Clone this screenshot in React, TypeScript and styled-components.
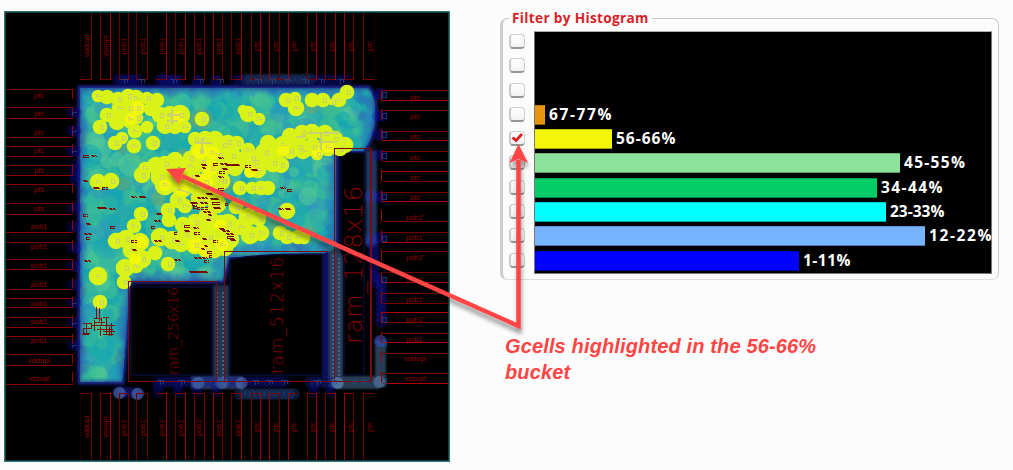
import React from 'react';
import styled, { createGlobalStyle } from 'styled-components';

const Global = createGlobalStyle`
  *{box-sizing:border-box}
  body{margin:0;background:#fcfcfc;overflow:hidden}
`;
const Page = styled.main`
  position:relative;display:flex;width:1013px;height:470px;padding:11px 0 0 4px;
  background:#fcfcfc;overflow:hidden;
`;
const MapFrame = styled.section`
  flex:none;width:446px;height:451px;
  svg{display:block}
`;
const Side = styled.section`
  display:flex;flex-direction:column;width:499px;margin-left:50px;padding-top:6px;
`;
const Group = styled.fieldset`
  display:flex;min-width:0;height:271px;margin:-8px 0 0;padding:4px 0 0 6px;
  border:1px solid #c4cac4;border-left:3px solid #ccc;border-bottom:1px solid #dcdedb;
  border-radius:7px;
`;
const Legend = styled.legend`
  height:18px;margin-left:0;padding:0 3px 0 3px;color:#d81f28;white-space:nowrap;
  font:700 13.6px/18px "Open Sans","Noto Sans",sans-serif;letter-spacing:.34px;
`;
const Checks = styled.div`
  display:flex;flex-direction:column;width:25px;
`;
const CheckCell = styled.div`
  height:24.3px;padding-top:3px;
`;
const Check = styled.div`
  width:16px;height:15px;border:1px solid #ccd0cc;border-bottom:2px solid #949894;
  border-left:2px solid #c8ccc8;border-radius:4px;background:linear-gradient(#fff,#f1f3f1);
  svg{display:block;overflow:visible}
`;
const Chart = styled.div`
  width:458px;height:243px;background:#000;border:1px solid #777;border-top:1px solid #aab0aa;
`;
const Row = styled.div`
  display:flex;align-items:flex-start;height:24.3px;
`;
const Bar = styled.div<{ $color: string; $w: number }>`
  flex:none;width:${p => p.$w}px;height:20px;background:${p => p.$color};
  border-bottom:1px solid #0005;border-top:1px solid #0003;
`;
const Label = styled.span<{ $space: number }>`
  margin:-1px 0 0 4px;color:#fff;white-space:nowrap;
  font:700 15.5px/20px "Open Sans","Noto Sans",sans-serif;letter-spacing:${p => p.$space}px;
`;
const Caption = styled.p`
  margin:53px 0 0 5px;color:#ff4444;white-space:pre;
  font:italic 700 20px/26px "Liberation Sans",Arial,sans-serif;letter-spacing:.14px;
`;
const Callout = styled.svg`
  position:absolute;left:0;top:0;pointer-events:none;
`;

const rows = [
  { w: 0, c: '', t: '', s: 0 }, { w: 0, c: '', t: '', s: 0 }, { w: 0, c: '', t: '', s: 0 },
  { w: 10, c: '#e89410', t: '67-77%', s: 1.6 },
  { w: 77, c: '#f4f60a', t: '56-66%', s: 1 },
  { w: 365, c: '#8be29b', t: '45-55%', s: 1.3 },
  { w: 342, c: '#04cc66', t: '34-44%', s: 1.4 },
  { w: 351, c: '#00ffff', t: '23-33%', s: 0 },
  { w: 390, c: '#77b4ff', t: '12-22%', s: 1.6 },
  { w: 264, c: '#0000ff', t: '1-11%', s: .5 },
];

// Repeatable pseudo-random sequence for the density texture.
const makeRandom = (seed: number) => () => {
  seed = (seed * 1664525 + 1013904223) % 4294967296;
  return seed / 4294967296;
};

type Spot = [number, number, number, string, number];
const region = 'M80 88H368Q376 93 375 118Q374 137 363 151H336V249L322 254L229 257L223 281H130L126 340L122 382H80Z';
const inRegion = (x: number, y: number) =>
  (y < 150 && x < 366) || (y < 250 && x < 329) || (y < 279 && x < 217) || x < 121;

const rnd = makeRandom(17);
const tints = ['#43c28f', '#38bb95', '#19aab0', '#2db1a5', '#0fa5b4', '#46c28a', '#3095c0', '#57c995', '#12a8b0', '#3fc492'];
const density: Spot[] = [];
for (let i = 0; i < 1100; i++) {
  const x = 84 + rnd() * 285, y = 93 + rnd() * 284;
  if (inRegion(x, y)) density.push([x, y, 5 + rnd() * 7, tints[Math.floor(rnd() * tints.length)], .5]);
}
const edges: Spot[] = [];
const edge = (x1: number, y1: number, x2: number, y2: number) => {
  const n = Math.hypot(x2 - x1, y2 - y1) / 5;
  for (let i = 0; i <= n; i++)
    edges.push([x1 + (x2 - x1) * i / n + rnd() * 4 - 2, y1 + (y2 - y1) * i / n + rnd() * 4 - 2, 3 + rnd() * 4, ['#2a55b5', '#2777bf', '#2b65b8', '#258bc4'][Math.floor(rnd() * 4)], .36]);
};
edge(82, 92, 82, 376); edge(85, 91, 362, 91); edge(371, 100, 370, 135); edge(331, 165, 331, 245);
edge(232, 250, 328, 246); edge(126, 284, 120, 378); edge(134, 277, 214, 277); edge(220, 257, 220, 276);
edge(364, 142, 368, 135); edge(358, 96, 368, 100); edge(357, 110, 368, 122);

const hot: number[][] = [
  [98,96,6],[107,97,7],[118,99,7],[128,96,7],[136,98,8],[147,98,6],[157,100,7],[107,115,7],[120,108,8],[129,108,8],[137,108,8],[117,122,8],[130,119,9],[137,118,6],[100,127,7],[135,131,7],[147,127,6],[122,138,6],[115,143,7],[134,146,7],[153,143,7],[151,109,7],[160,115,8],[170,115,9],[180,115,10],[165,126,8],[175,126,8],[185,127,6],[202,119,7],
  [195,139,7],[205,139,8],[215,140,9],[223,145,7],[200,151,10],[213,153,10],[190,158,7],[175,160,8],[228,142,7],[221,155,9],[232,156,9],
  [248,114,8],[243,110,5],[259,119,6],[286,100,7],[295,98,6],[296,108,8],[312,100,7],[323,100,7],[332,102,3],[339,100,7],[347,92,7],
  [290,136,8],[302,133,8],[312,132,8],[325,133,8],[335,139,8],[345,145,8],[328,147,9],[313,147,9],[299,147,9],[283,145,9],[268,143,8],[265,153,10],[237,143,7],[248,150,7],[317,154,6],[275,153,9],[290,151,8],[303,151,8],[340,149,7],[252,158,8],
  [134,148,5],[98,182,8],[111,181,8],[142,175,8],[145,168,6],[156,166,9],[165,164,8],[160,177,9],[165,185,10],[175,176,9],[182,189,9],[178,200,8],[190,166,10],[202,162,10],[211,168,10],[219,172,9],[221,181,9],[205,182,9],[192,177,9],[196,187,8],[210,195,9],[217,204,9],[200,199,9],[185,206,7],[168,210,7],[169,220,7],[141,214,7],[134,226,7],[116,241,8],[126,239,9],[140,242,9],[132,250,9],[142,259,9],[125,268,9],[136,266,7],[155,253,7],[160,237,9],[172,240,9],[183,225,8],[195,222,8],[205,225,9],[208,216,9],[197,234,9],[209,237,9],[185,234,7],[220,225,10],[181,244,8],[195,245,9],[206,250,8],[222,245,10],[214,249,9],[168,264,7],[124,282,7],[98,276,9],[100,302,7],
  [240,161,9],[255,162,9],[258,170,8],[273,163,9],[281,165,8],[235,168,8],[223,168,8],[240,188,7],[252,188,6],[261,188,7],[268,188,7],[223,181,6],[236,207,7],[248,217,9],[259,219,7],[287,211,8],[250,235,9],[261,233,8],[228,224,10],[229,239,10],[225,248,8],[241,227,8],[280,233,7],[287,237,7],[298,237,7],[304,238,6]
];

const topLines = [91,100,110,119,128,136,147,166,175,185,194,204,213,222,231,241,251,260,269,279,288,307,316,325,335,344,353,363];
const strongTop = [110,166,185,213,241,260,269,288,316,335,344];
const leftLines = [89,107,118,137,146,156,165,175,184,203,214,232,242,259,269,289,298,307,317,327,336,354,365,384];
const rightLines = [90,100,110,131,140,151,161,171,181,192,201,221,232,242,251,272,282,293,303,312,322,333,342,353,373,383];
const topTextX = [87,106,124,143,162,181,199,219,238,257,276,294,313,332,351,370];
const leftTextY = [96,114,133,151,171,190,209,227,247,266,285,304,322,341,361,379];
const rightTextY = [97,116,136,157,177,197,217,237,257,279,299,319,339,358,378];

const redMarks: number[][] = [
  [83,155,6],[91,155,5],[83,180,4],[83,214,5],[86,223,4],[84,233,7],[86,237,4],[84,260,6],[93,187,6],[102,187,6],[97,207,9],[109,208,6],[110,226,5],[131,196,5],[139,196,6],[131,240,6],[132,249,4],[154,240,7],[151,226,4],[154,220,6],[156,213,5],[174,232,4],[175,240,4],[174,259,6],[184,225,6],[193,227,5],[184,230,5],[194,232,6],[190,202,7],[200,202,8],[212,202,8],[197,197,10],[210,198,8],[197,207,12],[213,207,7],[203,211,7],[193,206,4],[208,214,4],[206,219,4],[213,240,5],[202,238,4],[204,245,4],[207,251,5],[194,257,13],[189,271,18],[204,260,5],[201,164,5],[218,157,5],[213,163,5],[220,163,8],[225,164,14],[245,165,6],[251,169,6],[280,187,5],[287,189,5],[278,208,5],[285,208,5],[225,203,4],[230,239,5],[226,233,7],[227,236,7],[222,230,8],[222,168,5],[219,171,6],[195,175,4],[202,167,4],[218,188,6],[218,176,5],[219,228,5],[192,203,5],[206,193,6],[201,248,4],[209,255,3]
];
const greyMarks = hot.filter((_, i) => i % 5 !== 1);

const pads: Spot[] = [];
const pad = (x1: number, y1: number, x2: number, y2: number, c: string, o = .32) => {
  const n = Math.max(1, Math.round(Math.hypot(x2 - x1, y2 - y1) / 5));
  for (let i = 0; i <= n; i++) pads.push([x1 + (x2 - x1) * i / n, y1 + (y2 - y1) * i / n, 6, c, o]);
};
pad(118, 80, 138, 80, '#0c10a0'); pad(160, 80, 178, 80, '#0c10a0'); pad(197, 81, 198, 81, '#0c10a0', .25); pad(215, 81, 217, 81, '#0c10a0', .25);
pad(235, 80, 347, 80, '#0c10a0', .22); pad(246, 79, 310, 79, '#35627a', .18);
[112,131,151].forEach(y => pad(72, y, 75, y, '#08087c', .35));
pad(75, 165, 75, 181, '#080ca0', .25); [208,227,248,266,285,303,323,345].forEach(y => pad(72, y, 76, y, '#080ca0', .22));
[94,116,135,155,197,238].forEach(y => pad(378, y, 382, y, '#0808a0', .3));
pad(371, 148, 371, 244, '#2c4f90', .12); pad(373, 245, 375, 282, '#0c10b0', .3); pad(381, 280, 381, 322, '#1015b0', .3);
pad(371, 195, 371, 198, '#2840b0', .3); pad(371, 238, 371, 242, '#2840b0', .3);
pad(118, 391, 138, 393, '#1720a0', .28); pad(119, 393, 120, 393, '#5271b8', .4); pad(137, 394, 138, 394, '#5271b8', .4);
pad(158, 382, 285, 382, '#1016a0', .25); [158,178,197,216,314,330].forEach(x => pad(x, 386, x, 392, '#0a0a8c', .28));
pad(240, 394, 294, 394, '#29509b', .3); pad(310, 382, 337, 382, '#182393', .3);
pad(197, 383, 199, 383, '#5f90c0', .3); pad(221, 383, 223, 383, '#5f90c0', .25); pad(241, 383, 242, 383, '#5f80c0', .3);
pad(337, 383, 338, 383, '#6fa0c0', .35); pad(379, 382, 380, 382, '#5f80b0', .35); pad(380, 341, 381, 341, '#3050c0', .4);

function PadLines() {
  return <g fill="none" stroke="#970000" strokeWidth="1" shapeRendering="crispEdges">
    {topLines.map(x => {
      const strong = strongTop.includes(x);
      return <path key={x} d={`M${x + .5} 13V80M${x + .5} 393V460`} stroke={strong ? '#a00000' : '#680000'} />;
    })}
    <path d="M80.5 13V80M80.5 393V460M147.5 13V80M147.5 393V460M374.5 13V80" stroke="#480000" strokeDasharray="1 2" />
    <path d="M80 79.5H91M100 79.5H110M119 79.5H130M136 79.5H147M156 79.5H166M175 79.5H185M194 79.5H204M213 79.5H222M231 79.5H241M251 79.5H260M269 79.5H288M307 79.5H316M325 79.5H335M344 79.5H353M363 79.5H374M80 393.5H91M100 393.5H110M119 393.5H128M136 393.5H147M156 393.5H166M175 393.5H185M194 393.5H204M213 393.5H222M231 393.5H241M251 393.5H260M269 393.5H279M288 393.5H298M307 393.5H316M325 393.5H335M344 393.5H354M363 393.5H374" stroke="#760000" />
    {leftLines.map((y, i) => <path key={y} d={`M6 ${y + .5}H73`} stroke={i % 3 === 0 ? '#760000' : '#8b0000'} />)}
    {rightLines.map((y, i) => <path key={y} d={`M382 ${y + .5}H448`} stroke={i % 3 === 1 ? '#b00000' : '#760000'} />)}
    {leftTextY.map(y => <path key={y} d={`M72.5 ${y - 7}v10`} />)}
    {rightTextY.map(y => <path key={y} d={`M381.5 ${y - 7}v11`} />)}
  </g>;
}

function PadNames() {
  return <g fill="#900000" fontFamily="Liberation Sans,Arial,sans-serif" fontSize="7.5" textAnchor="middle">
    {leftTextY.map((y, i) => <text key={y} x="39" y={y + 2}>{i < 4 ? 'pfc' : i < 7 ? 'pfs' : i < 14 ? 'pob1' : i === 14 ? 'vddopl' : 'vssopl'}</text>)}
    {rightTextY.map((y, i) => <text key={y} x="415" y={y + 3}>{i < 6 ? 'pfc' : i < 13 ? "pob1'" : i === 13 ? 'vddopl' : 'vssopl'}</text>)}
    {topTextX.map((x, i) => <g key={x}>
      <text transform={`translate(${x + 2} 46) rotate(-90)`}>{i === 0 ? 'vddopl' : i === 1 ? 'vssopl' : i < 9 ? 'pob1' : 'pfc'}</text>
      <text transform={`translate(${x + 2} 427) rotate(-90)`}>{i === 0 ? 'vddopl' : i === 1 ? 'vssopl' : i < 9 ? "pob1'" : 'pfc'}</text>
    </g>)}
  </g>;
}

function DensityMap() {
  return <MapFrame><svg width="446" height="451" viewBox="4 11 446 451" aria-label="Cell density map">
    <defs>
      <filter id="soft" x="-10%" y="-10%" width="120%" height="120%"><feGaussianBlur stdDeviation="1.1" /></filter>
      <filter id="halo" x="-10%" y="-10%" width="120%" height="120%"><feGaussianBlur stdDeviation="1.8" /></filter>
      <clipPath id="core"><path d={region} /></clipPath>
    </defs>
    <rect x="4" y="11" width="446" height="451" fill="#2d7777" />
    <rect x="5.5" y="12.5" width="443" height="448" fill="#000" />
    <path d={region} fill="#25369b" stroke="#1c2790" strokeWidth="5" filter="url(#halo)" />
    <g filter="url(#soft)">
      <path d="M213 285H229V388H213Z" fill="#22354e" /><path d="M322 252H329V378H322Z" fill="#08085c" />
      <path d="M329 246H343V388H329Z" fill="#2c405c" />
      <path d="M366 151H377V245H366Z" fill="#1c3354" /><path d="M191 376H243V389H191Z" fill="#2c405c" />
      <path d="M336 376H380V389H336Z" fill="#283c54" /><path d="M375 340H386V387H375Z" fill="#283c54" />
    </g>
    <g clipPath="url(#core)">
      <g filter="url(#soft)"><path d={region} fill="#27a9ab" /></g>
      {density.map(([x, y, r, c, o], i) => <circle key={i} cx={x} cy={y} r={r} fill={c} opacity={o} />)}
      <g filter="url(#halo)">{edges.map(([x, y, r, c, o], i) => <circle key={i} cx={x} cy={y} r={r} fill={c} opacity={o} />)}</g>
      <path d={region} fill="none" stroke="#22348e" strokeWidth="4" opacity=".5" filter="url(#halo)" />
    </g>
    <path d="M333 255V378M339 258V378M217 292V378M223 292V378M371 154V236" stroke="#48617f" strokeWidth="2" strokeDasharray="2 2" />
    <g fill="#000" stroke="#080b36" strokeWidth="1.5">
      <rect x="131" y="287" width="81" height="88" /><path d="M230 260Q250 254 322 254V375H230Z" /><path d="M341 157L346 153H364V375H344V257L341 252Z" />
    </g>
    <g>
      {pads.map(([x, y, r, c, o], i) => <circle key={i} cx={x} cy={y} r={r} fill={c} opacity={o} />)}
      {[[123,184,7],[158,199,7],[202,119,11],[122,149,5],[312,107,7],[276,228,9],[240,205,9],[225,185,9],[310,232,6],[194,120,5],[182,154,6]].map(([x,y,r], i) => <circle key={i} cx={x} cy={y} r={r} fill="#66a778" opacity=".6" />)}
      {hot.map(([x, y, r], i) => <circle key={i} cx={x} cy={y} r={r + .3} fill="#d9f218" />)}
      {[[137,108,7],[131,119,6],[200,151,8],[213,153,7],[210,168,8],[205,182,8],[165,185,6],[182,189,7],[135,259,6],[195,245,7],[205,250,6],[222,245,6],[220,225,6],[178,117,6],[328,147,6],[283,150,6],[317,153,5],[141,242,6],[250,172,6]].map(([x, y, r], i) => <circle key={i} cx={x} cy={y} r={r} fill="#f3f70a" />)}
    </g>
    <g fill="none" stroke="#c4cb80" strokeWidth="1" shapeRendering="crispEdges" opacity=".8">
      {greyMarks.map(([x, y], i) => <path key={i} d={i % 3 ? `M${x} ${y - 2}h3v4h-3z` : `M${x - 2} ${y + 2}v-4h3M${x} ${y}h4`} />)}
      <path d="M167 115H180M172 109V125M167 121H178M308 133H340M321 133V150M296 137H305M318 142H334M195 143H212M202 138V154M172 181L180 176M177 189L190 193" strokeWidth="1.5" />
    </g>
    <g fill="none" stroke="#780c00" shapeRendering="crispEdges">
      {redMarks.map(([x, y, w], i) => <path key={i} strokeDasharray={i % 2 ? '3 1' : undefined} d={i % 3 === 0 ? `M${x} ${y + .5}h${w}M${x} ${y + 2.5}h${w}M${x + .5} ${y}v3` : `M${x} ${y + .5}h${w}M${x + 1} ${y + 1.5}h${w}`} />)}
      <path d="M96.5 307V318M99.5 308V321M83 323.5H91V328.5H83V333.5H90M94 318.5H101V326M91 325.5H115M100.5 327V336M106.5 318V334M111.5 323V336M103 331.5H115M82 334.5H89M103 317.5H109M86.5 323V334M95 322.5H105M97 329.5H113M103 334.5H114M94.5 320V331M109.5 327V336" />
    </g>
    <PadLines />
    <PadNames />
    <g fill="none" stroke="#780a10" strokeWidth="1" shapeRendering="crispEdges">
      <path d="M128.5 281.5H216.5V381.5H128.5ZM224.5 381V251.5H328M334.5 148V381M335 148.5H371M129 381.5H371" />
      <path d="M371 149V381" strokeWidth="2" />
    </g>
    <g fill="none" stroke="#284f88" strokeWidth="1" shapeRendering="crispEdges" opacity=".65">
      {[94,115,134,155,196,238,279,319,343,380].map(y => <path key={y} d={`M382 ${y - 2}h4v5h-4z`} />)}
      {[112,131,151,303,323,345].map(y => <path key={y} d={`M77 ${y}h-5v3`} />)}
      {[121,138,170,197,217,255,269,283,302,318,337].map(x => <path key={x} d={`M${x} 79h6v4m-3-4v5`} />)}
      {[157,178,197,216,252,266,281,314,330,350,360].map(x => <path key={x} d={`M${x} 380h6v4m-3-4v5`} />)}
    </g>
    <g fill="#880008" fontFamily="DejaVu Sans,Liberation Sans,sans-serif" fontWeight="200">
      <text transform="translate(178 375) rotate(-90)" fontSize="14" textLength="88">ram_256x16</text>
      <text transform="translate(283 374) rotate(-90)" fontSize="17" textLength="117">ram_512x16</text>
      <text transform="translate(362 344) rotate(-90)" fontSize="24" textLength="158">ram_128x16</text>
    </g>
  </svg></MapFrame>;
}

function Histogram() {
  return <Group>
    <Legend>Filter by Histogram</Legend>
    <Checks>{rows.map((_, i) => <CheckCell key={i}><Check>
      {i === 4 && <svg width="13" height="12" viewBox="0 0 13 12"><path d="M1.5 5.5L5 8.5L11 2" fill="none" stroke="#dc2028" strokeWidth="2.8" /></svg>}
    </Check></CheckCell>)}</Checks>
    <Chart>{rows.map((r, i) => <Row key={i}>{r.w > 0 && <>
      <Bar $color={r.c} $w={r.w} /><Label $space={r.s}>{r.t}</Label>
    </>}</Row>)}</Chart>
  </Group>;
}

export default function App() {
  return <><Global /><Page>
    <DensityMap />
    <Side>
      <Histogram />
      <Caption>{'Gcells highlighted in the 56-66%\nbucket'}</Caption>
    </Side>
    <Callout width="1013" height="470" viewBox="0 0 1013 470">
      <defs><filter id="arrowShadow" filterUnits="userSpaceOnUse" x="140" y="130" width="410" height="220"><feDropShadow dx="1" dy="5" stdDeviation="2" floodColor="#000" floodOpacity=".4" /></filter></defs>
      <g filter="url(#arrowShadow)" fill="#ff4444">
        <path d="M518.5 160V326L182 176" fill="none" stroke="#ff4444" strokeWidth="4.5" />
        <path d="M166 169L186 168L182 175L179 184ZM518.5 144L528 163L518.5 159L509.5 163Z" />
      </g>
    </Callout>
  </Page></>;
}
